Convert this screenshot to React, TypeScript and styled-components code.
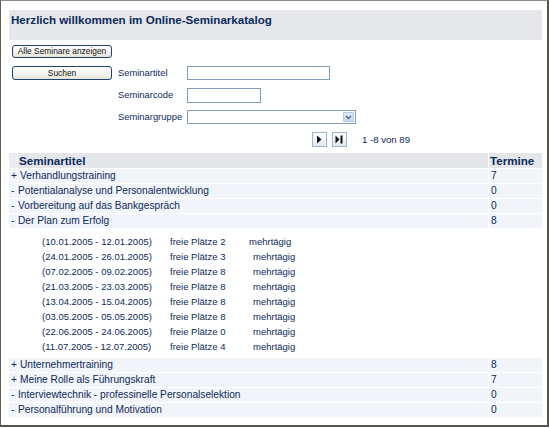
import React from 'react';
import styled, { createGlobalStyle } from 'styled-components';

const GlobalStyle = createGlobalStyle`
  body {
    margin: 0;
    background: #fff;
    font-family: "Liberation Sans", Arial, sans-serif;
    color: #0e2a5a;
  }
`;

const Frame = styled.div`
  width: 549px;
  height: 427px;
  box-sizing: border-box;
  border-left: 1px solid #5e5e56;
  border-top: 1px solid #8c8c84;
  border-right: 2px solid #55554d;
  border-bottom: 2px solid #55554d;
  padding: 9px 5px 0 8px;
  background: #fff;
  overflow: hidden;
`;

const TitleBar = styled.div`
  height: 30px;
  box-sizing: border-box;
  background: #e6e7eb;
  padding: 3px 2px 0;
`;

const Title = styled.h1`
  margin: 0;
  font-size: 11.6px;
  line-height: 14px;
  font-weight: bold;
  color: #0b2a5a;
`;

const XpButton = styled.button<{ $h: number }>`
  display: block;
  width: 100px;
  height: ${p => p.$h}px;
  margin: 0 0 0 3px;
  padding: 0;
  box-sizing: border-box;
  border: 1px solid #24426e;
  border-radius: 3px;
  background: linear-gradient(#fefefd, #f3f2ec 60%, #e6e3d8);
  font-family: "Liberation Sans", Arial, sans-serif;
  font-size: 8.4px;
  line-height: 1;
  color: #111;
`;

const ShowAll = styled.div`
  margin-top: 5px;
`;

const SearchForm = styled.div`
  margin-top: 8px;
  display: grid;
  grid-template-columns: 109px 69px 1fr;
  grid-auto-rows: 22px;
  align-items: start;
`;

const Label = styled.label`
  font-size: 9.4px;
  line-height: 14px;
  color: #0e2a5a;
`;

const TextInput = styled.input<{ $w: number; $h: number }>`
  width: ${p => p.$w}px;
  height: ${p => p.$h}px;
  box-sizing: border-box;
  margin: 0;
  padding: 0 2px;
  border: 1px solid #7f9db9;
  background: #fff;
  font-size: 9px;
`;

const Select = styled.div`
  width: 169px;
  height: 14px;
  box-sizing: border-box;
  border: 1px solid #7f9db9;
  background: #fff;
  display: flex;
  justify-content: flex-end;
  padding: 1px;
`;

const DropButton = styled.span`
  width: 11px;
  height: 10px;
  box-sizing: border-box;
  border: 1px solid #b4c6e6;
  border-radius: 1px;
  background: linear-gradient(#e4ecfa, #c5d5f3);
  display: flex;
  align-items: center;
  justify-content: center;
`;

const Pager = styled.div`
  display: flex;
  align-items: center;
  gap: 5px;
  padding-left: 303px;
  height: 15px;
`;

const NavButton = styled.span`
  width: 15px;
  height: 15px;
  box-sizing: border-box;
  border: 1px solid #9fb3cf;
  background: linear-gradient(#ffffff, #e3e9f2);
  display: flex;
  align-items: center;
  justify-content: center;
`;

const PageInfo = styled.span`
  margin-left: 10px;
  font-size: 9.6px;
  color: #0e2a5a;
`;

const Table = styled.div`
  margin-top: 6px;
  display: grid;
  grid-template-columns: 8px 1fr 53px;
  column-gap: 1px;
  row-gap: 1px;
`;

const HeadCell = styled.div<{ $light?: boolean }>`
  height: 15px;
  background: ${p => (p.$light ? '#ecedf0' : '#e4e6ea')};
  font-size: 11.6px;
  font-weight: bold;
  line-height: 15px;
  padding-left: 1px;
  color: #0b2a5a;
`;

const Cell = styled.div<{ $pad?: number }>`
  height: 14px;
  background: #f1f4f8;
  font-size: 10.2px;
  line-height: 14px;
  padding-left: ${p => p.$pad ?? 0}px;
  white-space: nowrap;
  overflow: visible;
  color: #0e2a5a;
`;

const Toggle = styled(Cell)`
  padding-left: 2px;
  position: relative;
  z-index: 1;
`;

const Details = styled.div`
  grid-column: 1 / -1;
  height: 128px;
  box-sizing: border-box;
  padding: 5px 0 0 33px;
  background: #fff;
`;

const DetailLine = styled.div`
  display: grid;
  grid-template-columns: 128px 83px auto;
  height: 15px;
  line-height: 15px;
  font-size: 9.5px;
  color: #0e2a5a;
  white-space: nowrap;
`;

const Multi = styled.span<{ $shift?: number }>`
  margin-left: ${p => p.$shift ?? 0}px;
`;

const PlayIcon = () => (
  <svg width="7" height="9" viewBox="0 0 7 9">
    <path d="M1 0.5 L5.5 4.5 L1 8.5 Z" fill="#111" />
  </svg>
);

const LastIcon = () => (
  <svg width="9" height="9" viewBox="0 0 9 9">
    <path d="M0.5 0.5 L4.5 4.5 L0.5 8.5 Z" fill="#111" />
    <rect x="5.5" y="0.5" width="2" height="8" fill="#111" />
  </svg>
);

const ChevronDown = () => (
  <svg width="7" height="5" viewBox="0 0 7 5">
    <path d="M1 1 L3.5 3.5 L6 1" stroke="#4d6185" strokeWidth="1.3" fill="none" />
  </svg>
);

type Seminar = { toggle: string; title: string; termine: number };

const top: Seminar[] = [
  { toggle: '+', title: 'Verhandlungstraining', termine: 7 },
  { toggle: '-', title: 'Potentialanalyse und Personalentwicklung', termine: 0 },
  { toggle: '-', title: 'Vorbereitung auf das Bankgespräch', termine: 0 },
  { toggle: '-', title: 'Der Plan zum Erfolg', termine: 8 },
];

const bottom: Seminar[] = [
  { toggle: '+', title: 'Unternehmertraining', termine: 8 },
  { toggle: '+', title: 'Meine Rolle als Führungskraft', termine: 7 },
  { toggle: '-', title: 'Interviewtechnik - professinelle Personalselektion', termine: 0 },
  { toggle: '-', title: 'Personalführung und Motivation', termine: 0 },
];

const dates = [
  ['10.01.2005', '12.01.2005', 2],
  ['24.01.2005', '26.01.2005', 3],
  ['07.02.2005', '09.02.2005', 8],
  ['21.03.2005', '23.03.2005', 8],
  ['13.04.2005', '15.04.2005', 8],
  ['03.05.2005', '05.05.2005', 8],
  ['22.06.2005', '24.06.2005', 0],
  ['11.07.2005', '12.07.2005', 4],
];

const renderRows = (rows: Seminar[]) =>
  rows.map(r => (
    <React.Fragment key={r.title}>
      <Toggle>{r.toggle}</Toggle>
      <Cell $pad={r.toggle === '+' ? 2 : 0}>{r.title}</Cell>
      <Cell $pad={2}>{r.termine}</Cell>
    </React.Fragment>
  ));

const App = () => {
  return (
    <Frame>
      <GlobalStyle />
      <TitleBar>
        <Title>Herzlich willkommen im Online-Seminarkatalog</Title>
      </TitleBar>
      <ShowAll>
        <XpButton $h={13}>Alle Seminare anzeigen</XpButton>
      </ShowAll>
      <SearchForm>
        <XpButton $h={14}>Suchen</XpButton>
        <Label>Seminartitel</Label>
        <TextInput $w={143} $h={14} />
        <span />
        <Label>Seminarcode</Label>
        <TextInput $w={74} $h={15} />
        <span />
        <Label>Seminargruppe</Label>
        <Select>
          <DropButton>
            <ChevronDown />
          </DropButton>
        </Select>
      </SearchForm>
      <Pager>
        <NavButton>
          <PlayIcon />
        </NavButton>
        <NavButton>
          <LastIcon />
        </NavButton>
        <PageInfo>1 -8 von 89</PageInfo>
      </Pager>
      <Table>
        <HeadCell $light />
        <HeadCell>Seminartitel</HeadCell>
        <HeadCell>Termine</HeadCell>
        {renderRows(top)}
        <Details>
          {dates.map(([from, to, free], i) => (
            <DetailLine key={i}>
              <span>({from} - {to})</span>
              <span>freie Plätze {free}</span>
              <Multi $shift={i === 0 ? -4 : 0}>mehrtägig</Multi>
            </DetailLine>
          ))}
        </Details>
        {renderRows(bottom)}
      </Table>
    </Frame>
  );
};

export default App;
